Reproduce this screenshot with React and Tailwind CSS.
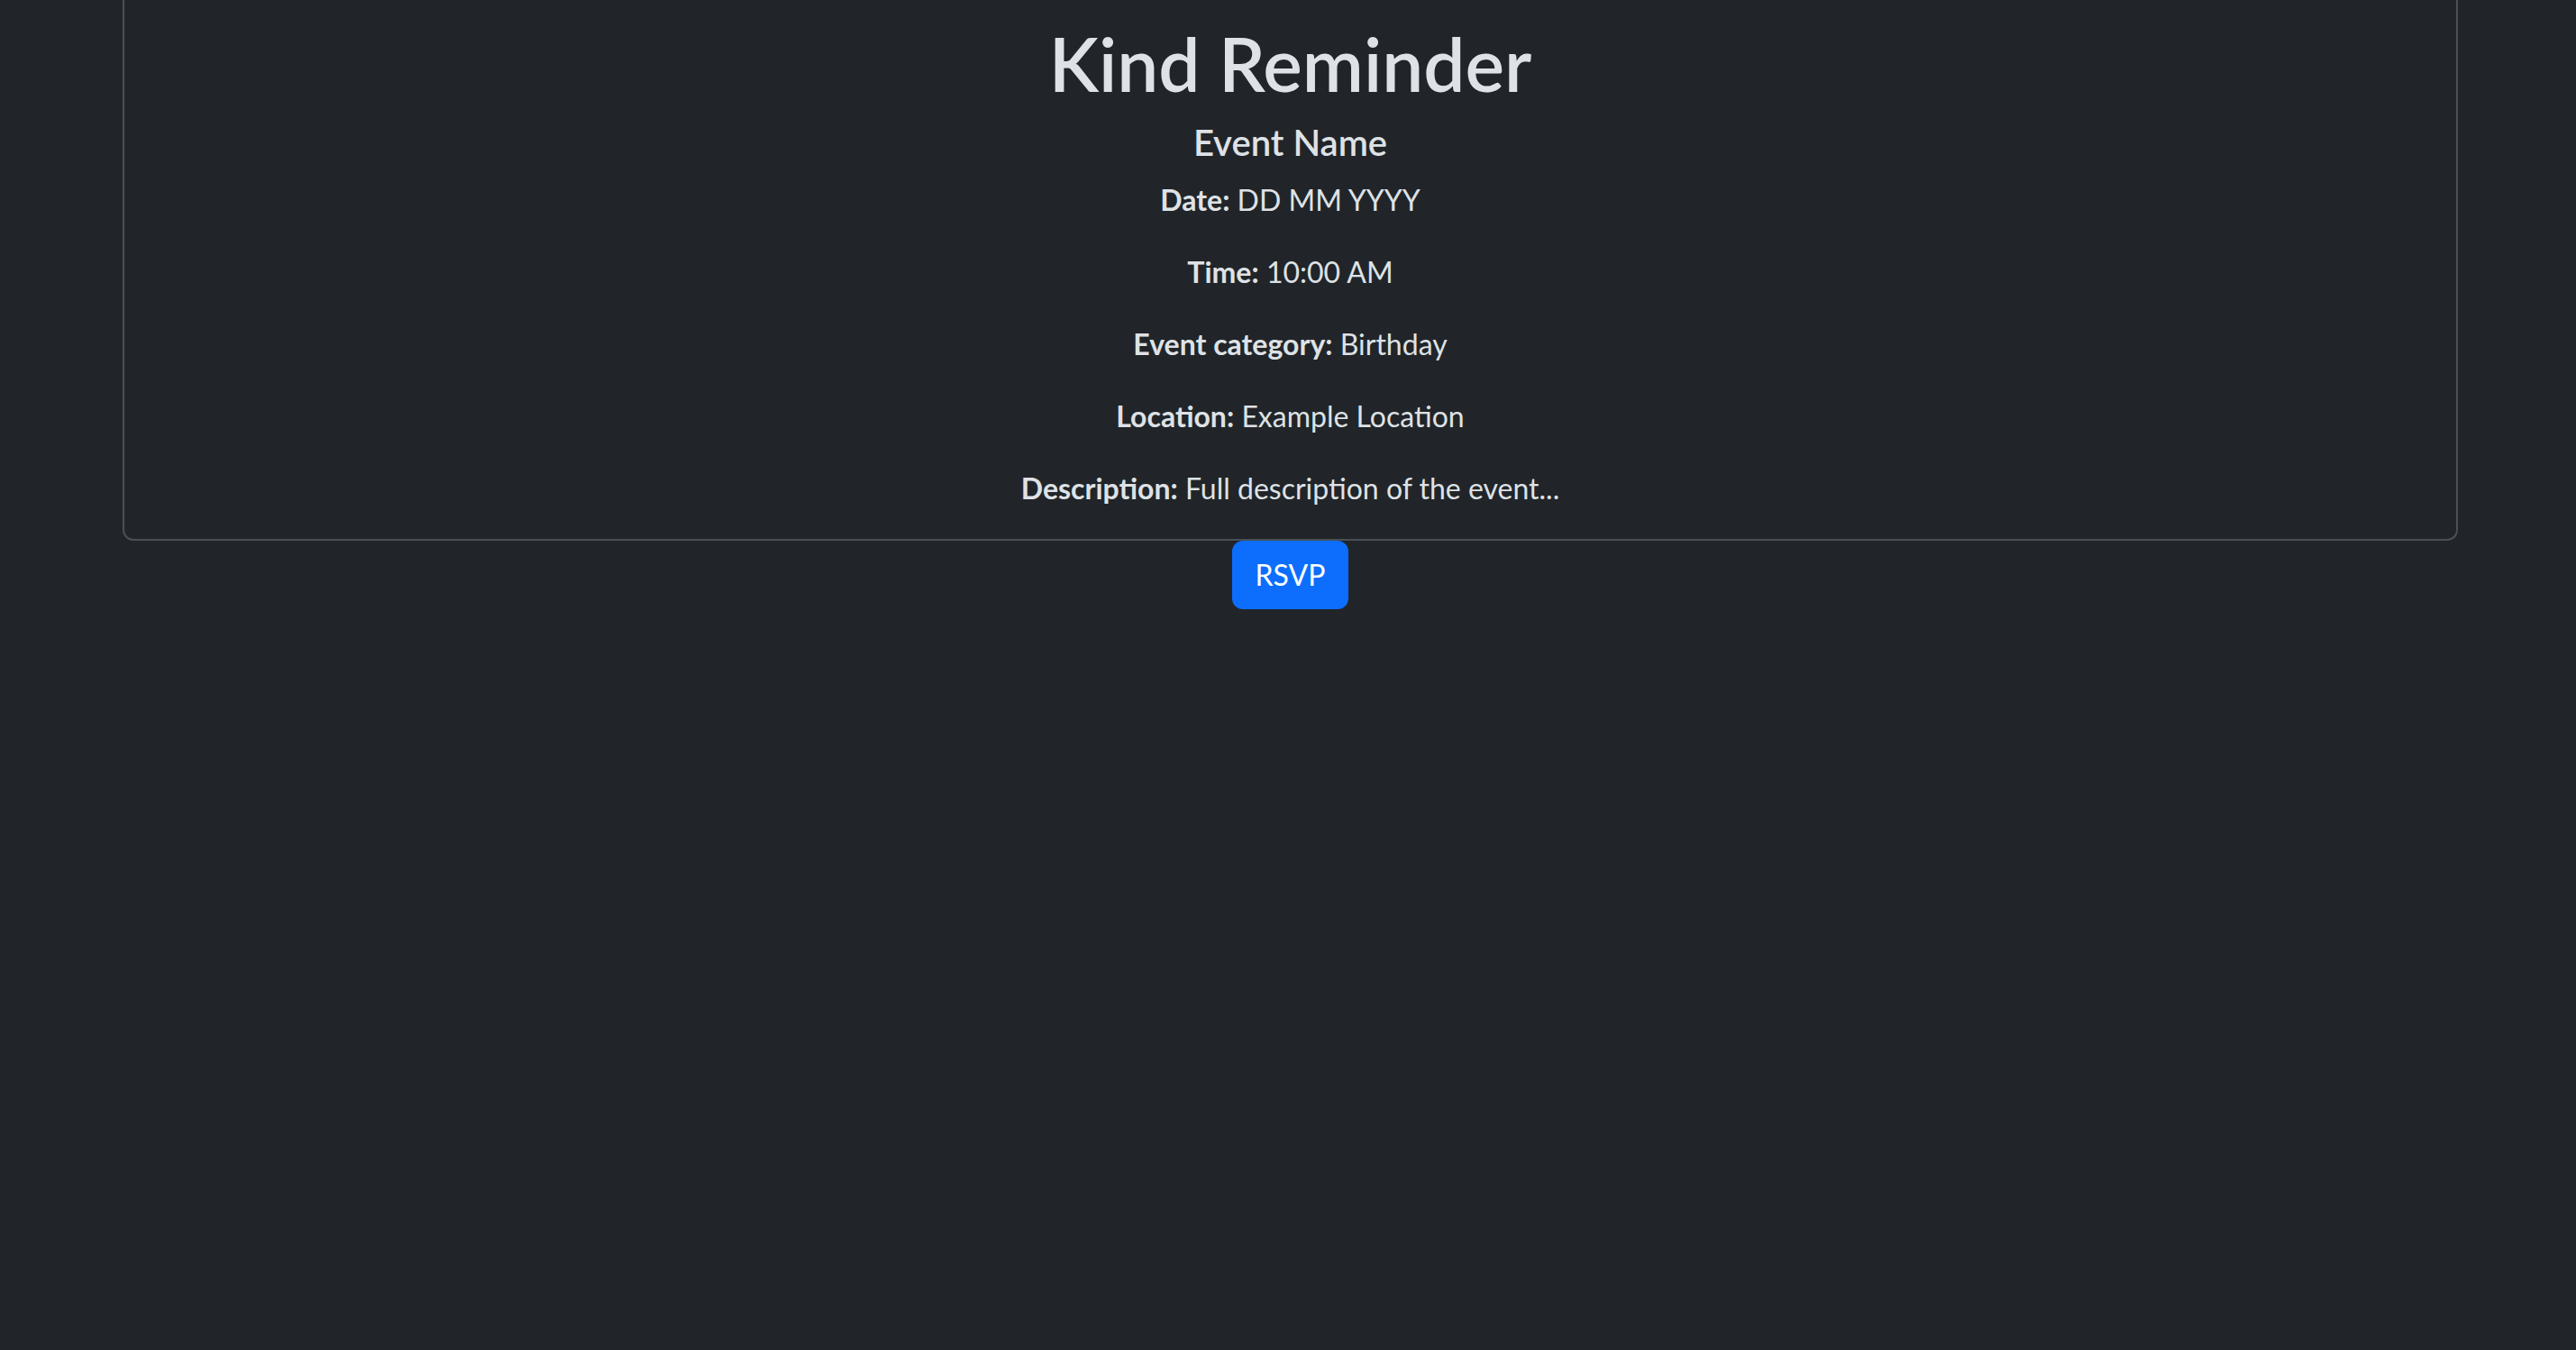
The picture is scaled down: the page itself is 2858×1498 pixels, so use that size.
import React from "react";

const details = [
  { label: "Date:", value: "DD MM YYYY" },
  { label: "Time:", value: "10:00 AM" },
  { label: "Event category:", value: "Birthday" },
  { label: "Location:", value: "Example Location" },
  { label: "Description:", value: "Full description of the event..." },
];

const App = () => {
  return (
    <div
      className="min-h-screen bg-[#212529] text-[#dee2e6]"
      style={{ fontFamily: 'Lato, "Open Sans", sans-serif' }}
    >
      <div className="pl-[136px] pr-[131px]">
        <div className="border-2 border-t-0 border-[#495057] rounded-b-[12px] text-center pt-[22px] pb-[32px]">
          <h1 className="text-[82px] leading-[96px] font-semibold mb-[16px]">Kind Reminder</h1>
          <h5 className="text-[40px] leading-[48px] font-semibold mb-[16px]">Event Name</h5>
          {details.map((d, i) => (
            <p
              key={d.label}
              className={`text-[32px] leading-[48px] ${i < details.length - 1 ? "mb-[32px]" : ""}`}
            >
              <strong className="font-bold">{d.label}</strong> {d.value}
            </p>
          ))}
        </div>
        <div className="flex justify-center">
          <button className="bg-[#0d6efd] text-white text-[32px] leading-[48px] px-[24px] py-[12px] border-2 border-[#0d6efd] rounded-[12px]">
            RSVP
          </button>
        </div>
      </div>
    </div>
  );
};

export default App;
